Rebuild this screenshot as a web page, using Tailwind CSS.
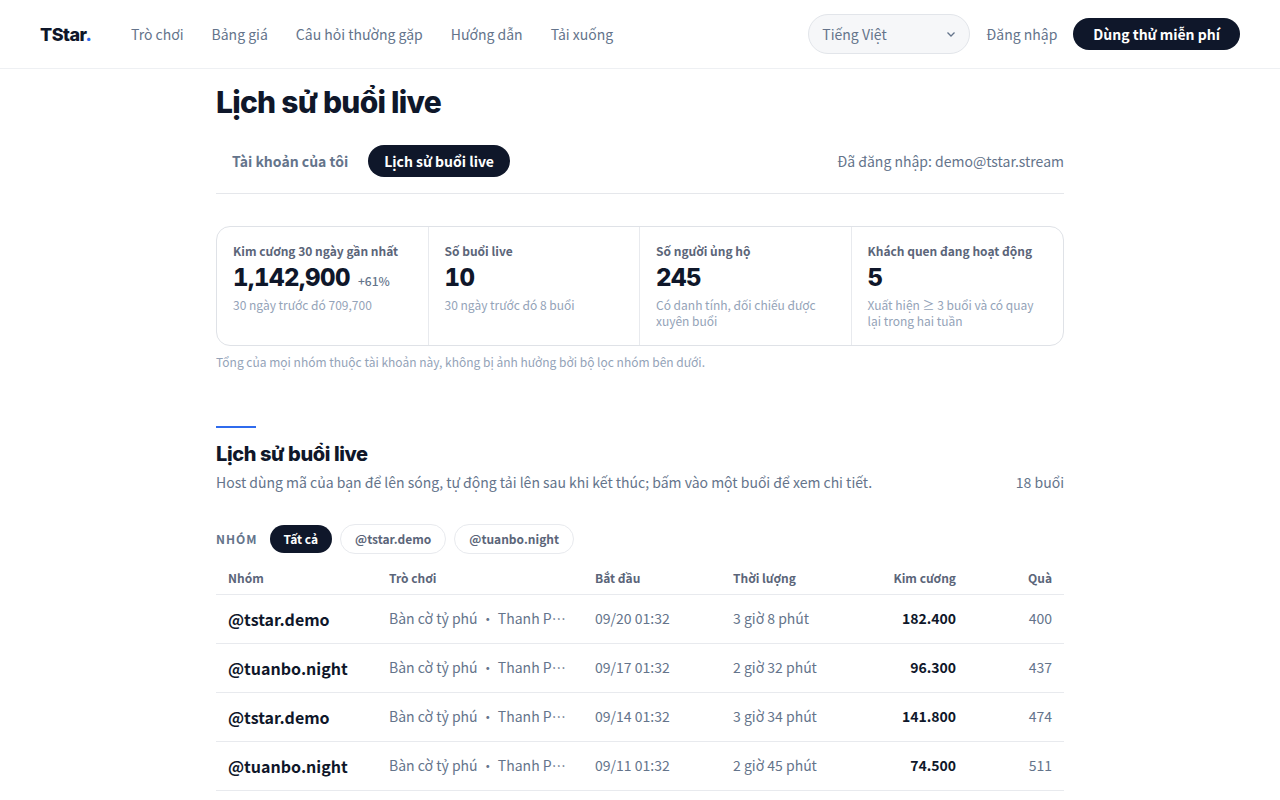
<!doctype html>
<html lang="vi">
<head>
<meta charset="utf-8">
<script src="https://cdn.jsdelivr.net/npm/@tailwindcss/browser@4"></script>
<title>TStar</title>
</head>
<body class="bg-white font-['Noto_Sans_CJK_JP','Noto_Sans',sans-serif] text-[#0f172a] h-[800px] overflow-hidden">
<header class="h-[69px] border-b border-[#eef0f3] px-10 flex items-center justify-between">
  <div class="flex items-center gap-10">
    <div class="font-['Inter',sans-serif] font-extrabold text-[18px] tracking-[-0.5px] text-[#0f172a] w-[51px]">TStar<span class="text-[#2f6bed]">.</span></div>
    <nav class="flex items-center gap-7 text-[14px] text-[#64748b]">
      <span>Trò chơi</span><span>Bảng giá</span><span>Câu hỏi thường gặp</span><span>Hướng dẫn</span><span>Tải xuống</span>
    </nav>
  </div>
  <div class="flex items-center gap-4">
    <div class="w-[162px] h-[40px] rounded-[20px] border border-[#e2e5ea] bg-[#f6f7f9] px-[13px] flex items-center justify-between text-[14px] text-[#64748b]">
      <span>Tiếng Việt</span>
      <svg width="10" height="10" viewBox="0 0 10 10" fill="none" stroke="#64748b" stroke-width="1.3"><path d="M1.5 3.5 5 7l3.500-3.500"/></svg>
    </div>
    <span class="text-[14px] text-[#64748b]">Đăng nhập</span>
    <span class="h-8 px-5 rounded-full bg-[#0f172a] text-white text-[14px] font-semibold flex items-center">Dùng thử miễn phí</span>
  </div>
</header>
<main class="w-[848px] mx-auto">
  <h1 class="font-['Inter','Noto_Sans',sans-serif] font-extrabold text-[30px] leading-[36px] tracking-[-0.75px] text-[#0f172a] mt-[15px]">Lịch sử buổi live</h1>
  <div class="mt-[25px] pb-4 border-b border-[#e5e7eb] flex items-center justify-between">
    <div class="flex items-center gap-1">
      <span class="h-8 px-4 rounded-full text-[14px] font-semibold text-[#64748b] flex items-center">Tài khoản của tôi</span>
      <span class="h-8 px-4 rounded-full bg-[#0f172a] text-white text-[14px] font-semibold flex items-center">Lịch sử buổi live</span>
    </div>
    <span class="text-[14px] text-[#64748b]">Đã đăng nhập: demo@tstar.stream</span>
  </div>
  <section class="mt-8 h-[120px] rounded-[14px] border border-[#dfe2e7] grid grid-cols-4">
    <div class="px-4 pt-[14px] border-r border-[#e8eaee]">
      <div class="text-[12px] leading-[20px] font-semibold text-[#5b6579]">Kim cương 30 ngày gần nhất</div>
      <div class="flex items-baseline gap-2 mt-[2px]"><span class="font-['Inter',sans-serif] font-extrabold tabular-nums text-[24px] leading-[30px] tracking-[-0.48px]">1,142,900</span><span class="text-[12px] font-medium text-[#64748b]">+61%</span></div>
      <div class="text-[12px] leading-[16px] text-[#94a3b8] mt-[4px]">30 ngày trước đó 709,700</div>
    </div>
    <div class="px-4 pt-[14px] border-r border-[#e8eaee]">
      <div class="text-[12px] leading-[20px] font-semibold text-[#5b6579]">Số buổi live</div>
      <div class="mt-[2px] font-['Inter',sans-serif] font-extrabold tabular-nums text-[24px] leading-[30px] tracking-[-0.48px]">10</div>
      <div class="text-[12px] leading-[16px] text-[#94a3b8] mt-[4px]">30 ngày trước đó 8 buổi</div>
    </div>
    <div class="px-4 pt-[14px] border-r border-[#e8eaee]">
      <div class="text-[12px] leading-[20px] font-semibold text-[#5b6579]">Số người ủng hộ</div>
      <div class="mt-[2px] font-['Inter',sans-serif] font-extrabold tabular-nums text-[24px] leading-[30px] tracking-[-0.48px]">245</div>
      <div class="text-[12px] leading-[16px] text-[#94a3b8] mt-[4px]">Có danh tính, đối chiếu được xuyên buổi</div>
    </div>
    <div class="px-4 pt-[14px]">
      <div class="text-[12px] leading-[20px] font-semibold text-[#5b6579]">Khách quen đang hoạt động</div>
      <div class="mt-[2px] font-['Inter',sans-serif] font-extrabold tabular-nums text-[24px] leading-[30px] tracking-[-0.48px]">5</div>
      <div class="text-[12px] leading-[16px] text-[#94a3b8] mt-[4px]">Xuất hiện ≥ 3 buổi và có quay lại trong hai tuần</div>
    </div>
  </section>
  <p class="mt-[7px] text-[12px] leading-[18px] text-[#94a3b8]">Tổng của mọi nhóm thuộc tài khoản này, không bị ảnh hưởng bởi bộ lọc nhóm bên dưới.</p>
  <div class="mt-[55px] w-10 h-[2px] bg-[#2f6bed]"></div>
  <h2 class="mt-[13px] font-['Inter','Noto_Sans',sans-serif] font-extrabold text-[20px] leading-[26px] tracking-[-0.4px]">Lịch sử buổi live</h2>
  <div class="mt-[4px] flex items-center justify-between text-[14px] leading-[22px] text-[#64748b]">
    <span>Host dùng mã của bạn để lên sóng, tự động tải lên sau khi kết thúc; bấm vào một buổi để xem chi tiết.</span>
    <span>18 buổi</span>
  </div>
  <div class="mt-[31px] flex items-center gap-2">
    <span class="text-[12px] font-semibold tracking-[1px] text-[#64748b] mr-1">NHÓM</span>
    <span class="h-[28px] px-[14px] rounded-full bg-[#0f172a] text-white text-[12px] font-semibold flex items-center">Tất cả</span>
    <span class="h-[30px] px-[14px] rounded-full border border-[#e8eaee] text-[12px] font-semibold text-[#5b6579] flex items-center">@tstar.demo</span>
    <span class="h-[30px] px-[14px] rounded-full border border-[#e8eaee] text-[12px] font-semibold text-[#5b6579] flex items-center">@tuanbo.night</span>
  </div>
  <table class="mt-[9px] w-full table-fixed border-collapse">
    <colgroup><col class="w-[161px]"><col class="w-[206px]"><col class="w-[138px]"><col class="w-[135px]"><col class="w-[112px]"><col class="w-[96px]"></colgroup>
    <thead>
      <tr class="h-[31px] border-b border-[#e8eaee] text-[12px] text-[#5b6579]">
        <th class="px-3 text-left font-semibold">Nhóm</th><th class="px-3 text-left font-semibold">Trò chơi</th><th class="px-3 text-left font-semibold">Bắt đầu</th><th class="px-3 text-left font-semibold">Thời lượng</th><th class="px-3 text-right font-semibold">Kim cương</th><th class="px-3 text-right font-semibold">Quà</th>
      </tr>
    </thead>
    <tbody class="text-[14px] text-[#64748b]">
      <tr class="h-[49px] border-b border-[#e8eaee]">
        <td class="px-3 text-[16px] font-semibold text-[#0f172a] whitespace-nowrap">@tstar.demo</td>
        <td class="px-3"><div class="w-[177px] truncate">Bàn cờ tỷ phú ・ Thanh Phố</div></td>
        <td class="px-3">09/20 01:32</td><td class="px-3">3 giờ 8 phút</td>
        <td class="px-3 text-right font-semibold text-[#0f172a]">182.400</td><td class="px-3 text-right">400</td>
      </tr>
      <tr class="h-[49px] border-b border-[#e8eaee]">
        <td class="px-3 text-[16px] font-semibold text-[#0f172a] whitespace-nowrap">@tuanbo.night</td>
        <td class="px-3"><div class="w-[177px] truncate">Bàn cờ tỷ phú ・ Thanh Phố</div></td>
        <td class="px-3">09/17 01:32</td><td class="px-3">2 giờ 32 phút</td>
        <td class="px-3 text-right font-semibold text-[#0f172a]">96.300</td><td class="px-3 text-right">437</td>
      </tr>
      <tr class="h-[49px] border-b border-[#e8eaee]">
        <td class="px-3 text-[16px] font-semibold text-[#0f172a] whitespace-nowrap">@tstar.demo</td>
        <td class="px-3"><div class="w-[177px] truncate">Bàn cờ tỷ phú ・ Thanh Phố</div></td>
        <td class="px-3">09/14 01:32</td><td class="px-3">3 giờ 34 phút</td>
        <td class="px-3 text-right font-semibold text-[#0f172a]">141.800</td><td class="px-3 text-right">474</td>
      </tr>
      <tr class="h-[49px] border-b border-[#e8eaee]">
        <td class="px-3 text-[16px] font-semibold text-[#0f172a] whitespace-nowrap">@tuanbo.night</td>
        <td class="px-3"><div class="w-[177px] truncate">Bàn cờ tỷ phú ・ Thanh Phố</div></td>
        <td class="px-3">09/11 01:32</td><td class="px-3">2 giờ 45 phút</td>
        <td class="px-3 text-right font-semibold text-[#0f172a]">74.500</td><td class="px-3 text-right">511</td>
      </tr>
    </tbody>
  </table>
</main>
</body>
</html>
